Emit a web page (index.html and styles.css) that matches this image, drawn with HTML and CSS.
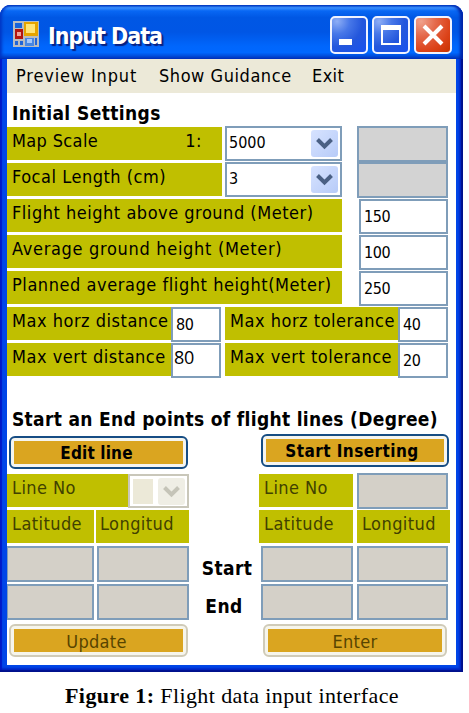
FILE: index.html
```html
<!DOCTYPE html>
<html lang="en">
<head>
<meta charset="utf-8">
<title>Input Data</title>
<link rel="stylesheet" href="styles.css">
</head>
<body>
<main class="window">
  <header class="titlebar">
    <svg class="app-icon" width="26" height="26" viewBox="0 0 26 26">
      <rect width="26" height="26" fill="#b9bcc0"/>
      <rect x="2" y="2" width="7" height="5" fill="#1763dc"/>
      <rect x="2" y="8" width="8" height="10" fill="#b3140f"/><rect x="4" y="11" width="4" height="4" fill="#f0a29a"/>
      <rect x="11" y="1" width="14" height="14" fill="#e6a400"/><rect x="13" y="3" width="9" height="9" fill="#ffe477"/>
      <rect x="2" y="20" width="3" height="4" fill="#2165d8"/><rect x="7" y="20" width="3" height="4" fill="#2165d8"/>
      <rect x="12" y="17" width="9" height="8" fill="#4887e4"/><rect x="14" y="18" width="5" height="4" fill="#a5c8fa"/>
      <rect x="22" y="17" width="2" height="7" fill="#2165d8"/>
    </svg>
    <h1 class="title">Input Data</h1>
    <div class="controls">
      <span class="control"><svg width="34" height="34" viewBox="0 0 34 34"><path d="M7 21h13v6H7z" fill="#fff"/></svg></span>
      <span class="control"><svg width="34" height="34" viewBox="0 0 34 34"><path d="M7 7h20v20H7zM9 12v13h16V12z" fill="#fff" fill-rule="evenodd"/></svg></span>
      <span class="control close"><svg width="34" height="34" viewBox="0 0 34 34"><path d="M8 8l18 18M26 8L8 26" stroke="#fff" stroke-width="4"/></svg></span>
    </div>
  </header>
  <nav class="menu"><span class="m1">Preview Input</span><span class="m2">Show Guidance</span><span class="m3">Exit</span></nav>
  <section class="client">
    <h2 class="heading">Initial Settings</h2>
    <div class="row"><div class="label w-scale"><span class="t-map">Map Scale</span><span class="ratio">1:</span></div>
      <div class="combo"><span>5000</span><i class="drop"><svg width="27" height="27" viewBox="0 0 27 27"><path d="M6.500 9.500l7 7 7-7" fill="none" stroke="#4a6084" stroke-width="4"/></svg></i></div><div class="box gray"></div></div>
    <div class="row"><div class="label w-scale"><span class="t-focal">Focal Length (cm)</span></div>
      <div class="combo"><span>3</span><i class="drop"><svg width="27" height="27" viewBox="0 0 27 27"><path d="M6.500 9.500l7 7 7-7" fill="none" stroke="#4a6084" stroke-width="4"/></svg></i></div><div class="box gray"></div></div>
    <div class="row"><div class="label w-wide"><span class="t-flight">Flight height above ground (Meter)</span></div><div class="box value">150</div></div>
    <div class="row"><div class="label w-wide"><span class="t-avg">Average ground height (Meter)</span></div><div class="box value">100</div></div>
    <div class="row"><div class="label w-wide"><span class="t-plan">Planned average flight height(Meter)</span></div><div class="box value">250</div></div>
    <div class="row"><div class="label w-dist">Max horz distance</div><div class="box small">80</div><div class="label w-tol">Max horz tolerance</div><div class="box small">40</div></div>
    <div class="row"><div class="label w-dist">Max vert distance</div><div class="box small pasted">80</div><div class="label w-tol">Max vert tolerance</div><div class="box small">20</div></div>
    <h2 class="heading second">Start an End points of flight lines (Degree)</h2>
    <div class="lines">
      <div class="group left">
        <div class="button active"><span class="face">Edit line</span></div>
        <div class="pair lineno"><div class="label">Line No</div><div class="combo off"><b></b><i class="drop"><svg width="27" height="27" viewBox="0 0 27 27"><path d="M6.500 9.500l7 7 7-7" fill="none" stroke="#c5c4b8" stroke-width="4"/></svg></i></div></div>
        <div class="pair"><div class="label">Latitude</div><div class="label">Longitud</div></div>
        <div class="pair fields"><div class="box"></div><div class="box"></div></div>
        <div class="pair fields"><div class="box"></div><div class="box"></div></div>
        <div class="button"><span class="face">Update</span></div>
      </div>
      <div class="middle"><span>Start</span><span>End</span></div>
      <div class="group right">
        <div class="button active"><span class="face">Start Inserting</span></div>
        <div class="pair lineno"><div class="label">Line No</div><div class="box"></div></div>
        <div class="pair"><div class="label">Latitude</div><div class="label">Longitud</div></div>
        <div class="pair fields"><div class="box"></div><div class="box"></div></div>
        <div class="pair fields"><div class="box"></div><div class="box"></div></div>
        <div class="button"><span class="face">Enter</span></div>
      </div>
    </div>
  </section>
</main>
<p class="caption"><b>Figure 1:</b> Flight data input interface</p>
</body>
</html>
```
FILE: styles.css
```css
* { box-sizing: border-box; }
body { margin: 0; padding-top: 5px; width: 469px; height: 713px; overflow: hidden; background: #fff; color: #000; font-family: "DejaVu Sans Condensed", "DejaVu Sans", sans-serif; font-stretch: condensed; font-size: 18px; }
.window { width: 463px; height: 667px; padding: 0 7px 7px; border-radius: 11px 11px 0 0; background: #0046e8; box-shadow: inset -2px -2px 1px #00108c, inset 2px 0 1px #0019c8, inset -4px -4px 2px #0028c8; }
.titlebar { display: flex; height: 54px; margin: 0 -7px; padding: 0 11px 0 12px; border-radius: 11px 11px 0 0; background: linear-gradient(#0550d6 0, #3b91ff 5%, #0867f4 11%, #0057e4 23%, #0056e5 50%, #0066fc 76%, #0068ff 88%, #004bd8 95%, #003dc6 100%); box-shadow: inset -3px 0 3px #0024a7, inset 2px 0 3px #0036c4; }
.app-icon { margin: 16px 9px 0 1px; }
.title { margin: 15px 0 0; color: #fff; font: bold 23px/32px "DejaVu Sans Condensed", sans-serif; font-stretch: condensed; letter-spacing: -1px; text-shadow: 2px 2px 1px #082080; white-space: nowrap; }
.controls { display: flex; gap: 4px; margin: 11px 0 0 auto; }
.control { width: 38px; height: 38px; border: 2px solid #f0f3ff; border-radius: 5px; background: radial-gradient(circle at 15% 10%, #8eaef5 0, #4777e8 30%, #2457dc 60%, #1651f0 100%); }
.control svg { display: block; }
.close { background: radial-gradient(circle at 15% 10%, #f0a18c 0, #e4684a 35%, #dc4319 70%, #c83200 100%); }
.menu { display: flex; height: 34px; padding-left: 9px; background: #ece9d8; line-height: 33px; white-space: nowrap; }
.m1 { width: 143px; letter-spacing: .85px; }
.m2 { width: 153px; letter-spacing: .55px; }
.m3 { letter-spacing: .4px; }
.client { height: 572px; overflow: hidden; background: #fff; white-space: nowrap; }
.heading { margin: 0; height: 33px; padding: 9px 0 0 5px; font-size: 19px; line-height: 23px; letter-spacing: .4px; }
.heading.second { height: 56px; padding-top: 30px; letter-spacing: .31px; }
.row { display: flex; height: 36px; }
.label { height: 33px; margin-top: 1px; padding-left: 5px; background: #c0bf00; line-height: 27px; letter-spacing: .52px; }
.t-map { letter-spacing: .35px; }
.t-avg { letter-spacing: .69px; }
.t-plan { letter-spacing: .56px; }
.w-scale { display: flex; width: 215px; margin-right: 3px; }
.ratio { margin-left: auto; padding-right: 20px; }
.w-wide { width: 335px; margin-right: 17px; }
.w-dist { width: 164px; }
.w-tol { width: 173px; margin-left: 4px; }
.box { height: 36px; border: 2px solid #7f9db9; background: #fff; }
.gray { width: 91px; background: #d3d3d3; }
.value, .small { height: 35px; margin-top: 1px; padding-left: 3px; font-size: 16px; line-height: 31px; letter-spacing: -.4px; }
.value { width: 89px; }
.small { width: 50px; }
.pasted { padding-left: 1px; font: 18px/24px "Open Sans", sans-serif; letter-spacing: -.4px; }
.combo { display: flex; justify-content: space-between; width: 117px; height: 35px; margin-right: 15px; padding: 2px 2px 0 2px; border: 2px solid #7f9db9; font-size: 16px; line-height: 26px; }
.drop { width: 27px; height: 27px; border-radius: 3px; background: linear-gradient(135deg, #d7e3ff, #b7cbf8); }
.drop svg { display: block; }
.lines { display: flex; }
.group.left { width: 182px; }
.middle { width: 76px; margin-right: -6px; padding-top: 115px; text-align: center; font-size: 19px; font-weight: bold; line-height: 38px; letter-spacing: .4px; }
.middle span { display: block; }
.middle span:last-child { margin-left: -6px; }
.group.right { width: 191px; }
.button { width: 179px; height: 33px; margin: 2px 0 5px 2px; padding: 3px; border: 2px solid #d0cbb8; border-radius: 6px; background: #f6f5ec; color: #574400; }
.active { border-color: #164d84; background: #f5f5f0; color: #000; font-weight: bold; font-size: 17px; }
.face { display: block; height: 23px; padding-right: 4px; background: #daa520; line-height: 25px; text-align: center; letter-spacing: .3px; }
.left .active .face { letter-spacing: .15px; }
.right .active { width: 188px; margin: 0 0 7px 2px; }
.right .active .face { letter-spacing: .45px; padding-right: 6px; line-height: 24px; }
.right .button:last-child { width: 184px; margin-left: 4px; }
.right .button:last-child .face { padding-right: 0; }
.pair { display: grid; grid-template-columns: 87px 93px; column-gap: 2px; height: 36px; }
.group .label { margin-top: 0; color: #414100; line-height: 27px; letter-spacing: .42px; }
.left .pair .label + .label { padding-left: 4px; }
.left .lineno { grid-template-columns: 121px 61px; column-gap: 0; }
.right .pair { grid-template-columns: 94px 93px; column-gap: 4px; }
.right .lineno .box { width: 91px; margin-top: -1px; background: #d4d0c8; }
.off { width: 61px; height: 34px; margin: 0; border-color: #c9c7ba; background: #fff; }
.off b { width: 20px; height: 25px; margin: 1px; background: #ece9d8; }
.off .drop { background: #efeee5; }
.group .fields { height: 38px; }
.fields .box { background: #d4d0c8; }
.left .fields { grid-template-columns: 87px 92px; column-gap: 3px; }
.left .fields .box:first-child { margin-left: -1px; }
.right .fields { grid-template-columns: 92px 91px; padding-left: 2px; }
.caption { margin: 11px 0 0; padding-right: 5px; text-align: center; font: 22px/26px "Liberation Serif", serif; letter-spacing: .4px; white-space: nowrap; }
```
